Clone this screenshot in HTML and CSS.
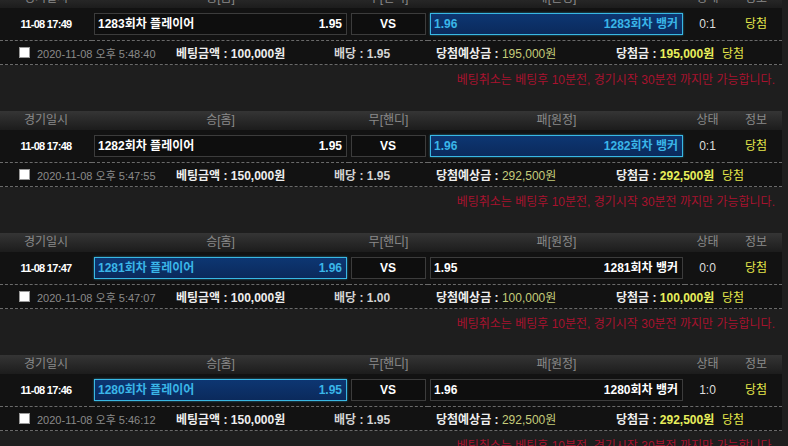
FILE: index.html
```html
<!DOCTYPE html>
<html lang="ko">
<head>
    <meta charset="UTF-8">
    <meta name="viewport" content="width=device-width, initial-scale=1.0">
    <title>베팅내역</title>
    <link rel="stylesheet" href="styles.css">
</head>
<body>
    <div class="bet-list">
        <table class="bet-table">
            <colgroup>
                <col class="c-time"><col class="c-home"><col class="c-draw"><col class="c-away"><col class="c-score"><col>
            </colgroup>
            <thead>
                <tr><th>경기일시</th><th>승[홈]</th><th>무[핸디]</th><th>패[원정]</th><th>상태</th><th>정보</th></tr>
            </thead>
            <tbody>
                <tr class="game-row">
                    <td class="time">11-08 17:49</td>
                    <td><div class="pick"><span>1283회차 플레이어</span><span>1.95</span></div></td>
                    <td><div class="pick draw">VS</div></td>
                    <td><div class="pick on"><span>1.96</span><span>1283회차 뱅커</span></div></td>
                    <td class="score">0:1</td>
                    <td class="result">당첨</td>
                </tr>
                <tr class="bet-row">
                    <td colspan="6">
                        <div class="bet-info">
                            <span class="date"><i class="check"></i>2020-11-08 오후 5:48:40</span>
                            <span class="label">베팅금액 : 100,000원</span>
                            <span class="label odds">배당 : 1.95</span>
                            <span class="label">당첨예상금 : <em class="expect">195,000원</em></span>
                            <span class="label">당첨금 : <em class="won">195,000원</em></span>
                            <span class="result">당첨</span>
                        </div>
                    </td>
                </tr>
                <tr class="notice-row"><td colspan="6">베팅취소는 베팅후 10분전, 경기시작 30분전 까지만 가능합니다.</td></tr>
            </tbody>
        </table>

        <table class="bet-table">
            <colgroup>
                <col class="c-time"><col class="c-home"><col class="c-draw"><col class="c-away"><col class="c-score"><col>
            </colgroup>
            <thead>
                <tr><th>경기일시</th><th>승[홈]</th><th>무[핸디]</th><th>패[원정]</th><th>상태</th><th>정보</th></tr>
            </thead>
            <tbody>
                <tr class="game-row">
                    <td class="time">11-08 17:48</td>
                    <td><div class="pick"><span>1282회차 플레이어</span><span>1.95</span></div></td>
                    <td><div class="pick draw">VS</div></td>
                    <td><div class="pick on"><span>1.96</span><span>1282회차 뱅커</span></div></td>
                    <td class="score">0:1</td>
                    <td class="result">당첨</td>
                </tr>
                <tr class="bet-row">
                    <td colspan="6">
                        <div class="bet-info">
                            <span class="date"><i class="check"></i>2020-11-08 오후 5:47:55</span>
                            <span class="label">베팅금액 : 150,000원</span>
                            <span class="label odds">배당 : 1.95</span>
                            <span class="label">당첨예상금 : <em class="expect">292,500원</em></span>
                            <span class="label">당첨금 : <em class="won">292,500원</em></span>
                            <span class="result">당첨</span>
                        </div>
                    </td>
                </tr>
                <tr class="notice-row"><td colspan="6">베팅취소는 베팅후 10분전, 경기시작 30분전 까지만 가능합니다.</td></tr>
            </tbody>
        </table>

        <table class="bet-table">
            <colgroup>
                <col class="c-time"><col class="c-home"><col class="c-draw"><col class="c-away"><col class="c-score"><col>
            </colgroup>
            <thead>
                <tr><th>경기일시</th><th>승[홈]</th><th>무[핸디]</th><th>패[원정]</th><th>상태</th><th>정보</th></tr>
            </thead>
            <tbody>
                <tr class="game-row">
                    <td class="time">11-08 17:47</td>
                    <td><div class="pick on"><span>1281회차 플레이어</span><span>1.96</span></div></td>
                    <td><div class="pick draw">VS</div></td>
                    <td><div class="pick"><span>1.95</span><span>1281회차 뱅커</span></div></td>
                    <td class="score">0:0</td>
                    <td class="result">당첨</td>
                </tr>
                <tr class="bet-row">
                    <td colspan="6">
                        <div class="bet-info">
                            <span class="date"><i class="check"></i>2020-11-08 오후 5:47:07</span>
                            <span class="label">베팅금액 : 100,000원</span>
                            <span class="label odds">배당 : 1.00</span>
                            <span class="label">당첨예상금 : <em class="expect">100,000원</em></span>
                            <span class="label">당첨금 : <em class="won">100,000원</em></span>
                            <span class="result">당첨</span>
                        </div>
                    </td>
                </tr>
                <tr class="notice-row"><td colspan="6">베팅취소는 베팅후 10분전, 경기시작 30분전 까지만 가능합니다.</td></tr>
            </tbody>
        </table>

        <table class="bet-table">
            <colgroup>
                <col class="c-time"><col class="c-home"><col class="c-draw"><col class="c-away"><col class="c-score"><col>
            </colgroup>
            <thead>
                <tr><th>경기일시</th><th>승[홈]</th><th>무[핸디]</th><th>패[원정]</th><th>상태</th><th>정보</th></tr>
            </thead>
            <tbody>
                <tr class="game-row">
                    <td class="time">11-08 17:46</td>
                    <td><div class="pick on"><span>1280회차 플레이어</span><span>1.95</span></div></td>
                    <td><div class="pick draw">VS</div></td>
                    <td><div class="pick"><span>1.96</span><span>1280회차 뱅커</span></div></td>
                    <td class="score">1:0</td>
                    <td class="result">당첨</td>
                </tr>
                <tr class="bet-row">
                    <td colspan="6">
                        <div class="bet-info">
                            <span class="date"><i class="check"></i>2020-11-08 오후 5:46:12</span>
                            <span class="label">베팅금액 : 150,000원</span>
                            <span class="label odds">배당 : 1.95</span>
                            <span class="label">당첨예상금 : <em class="expect">292,500원</em></span>
                            <span class="label">당첨금 : <em class="won">292,500원</em></span>
                            <span class="result">당첨</span>
                        </div>
                    </td>
                </tr>
                <tr class="notice-row"><td colspan="6">베팅취소는 베팅후 10분전, 경기시작 30분전 까지만 가능합니다.</td></tr>
            </tbody>
        </table>
    </div>
</body>
</html>
```

FILE: styles.css
```css
body {
    margin: 0;
    background-color: #1e1e1e;
    font-family: 'Liberation Sans', 'Noto Sans CJK KR', sans-serif;
    font-size: 12px;
    color: #ddd;
}

/* list is scrolled a little, first header is cut at the top */
.bet-list {
    margin-top: -11px;
}

.bet-table {
    width: 782px;
    table-layout: fixed;
    border-collapse: separate;
    border-spacing: 0;
    margin-bottom: 20px;
}

.c-time { width: 92px; }
.c-home { width: 257px; }
.c-draw { width: 79px; }
.c-away { width: 257px; }
.c-score { width: 45px; }

th {
    height: 19px;
    padding: 0;
    line-height: 19px;
    background: linear-gradient(#353535, #1c1c1c);
    color: #8a8a8a;
    font-weight: normal;
    text-align: center;
}

.game-row td {
    padding: 5px 2px;
    background-color: #121212;
    border-bottom: 1px dashed #6a6a6a;
    text-align: center;
    line-height: 22px;
}

.time {
    color: #fff;
    font-weight: bold;
    font-size: 11px;
    letter-spacing: -0.7px;
}

.pick {
    display: flex;
    justify-content: space-between;
    align-items: center;
    height: 22px;
    box-sizing: border-box;
    padding: 0 4px 0 3px;
    border: 1px solid #3c3c3c;
    background-color: #0e0e0e;
    color: #fff;
    font-weight: bold;
}

.pick.draw {
    justify-content: center;
}

.pick.on {
    background: linear-gradient(#0d3672, #0b2a5c);
    border-color: #38b8e4;
    box-shadow: 0 0 2px rgba(56, 184, 228, 0.6);
    color: #3ab6e8;
}

.score {
    color: #ddd;
}

.result {
    color: #e4e54a;
}

.bet-row td {
    padding: 0;
    background-color: #121212;
    border-bottom: 1px dashed #6a6a6a;
}

.bet-info {
    display: grid;
    grid-template-columns: 157px 158px 102px 180px 106px auto;
    align-items: center;
    height: 23px;
    padding-left: 19px;
}

.date {
    display: flex;
    align-items: center;
    color: #8a8a8a;
    font-size: 11px;
}

.check {
    width: 9px;
    height: 9px;
    margin-right: 7px;
    background-color: #fff;
    border: 1px solid #999;
}

.label {
    color: #eee;
    font-weight: bold;
}

.label.odds {
    color: #d4d4d4;
}

.label em {
    font-style: normal;
}

.expect {
    color: #c5cc7a;
    font-weight: normal;
}

.won {
    color: #e8ef5c;
}

.notice-row td {
    height: 26px;
    padding: 0 7px 0 0;
    text-align: right;
    color: #a8122e;
}
```
